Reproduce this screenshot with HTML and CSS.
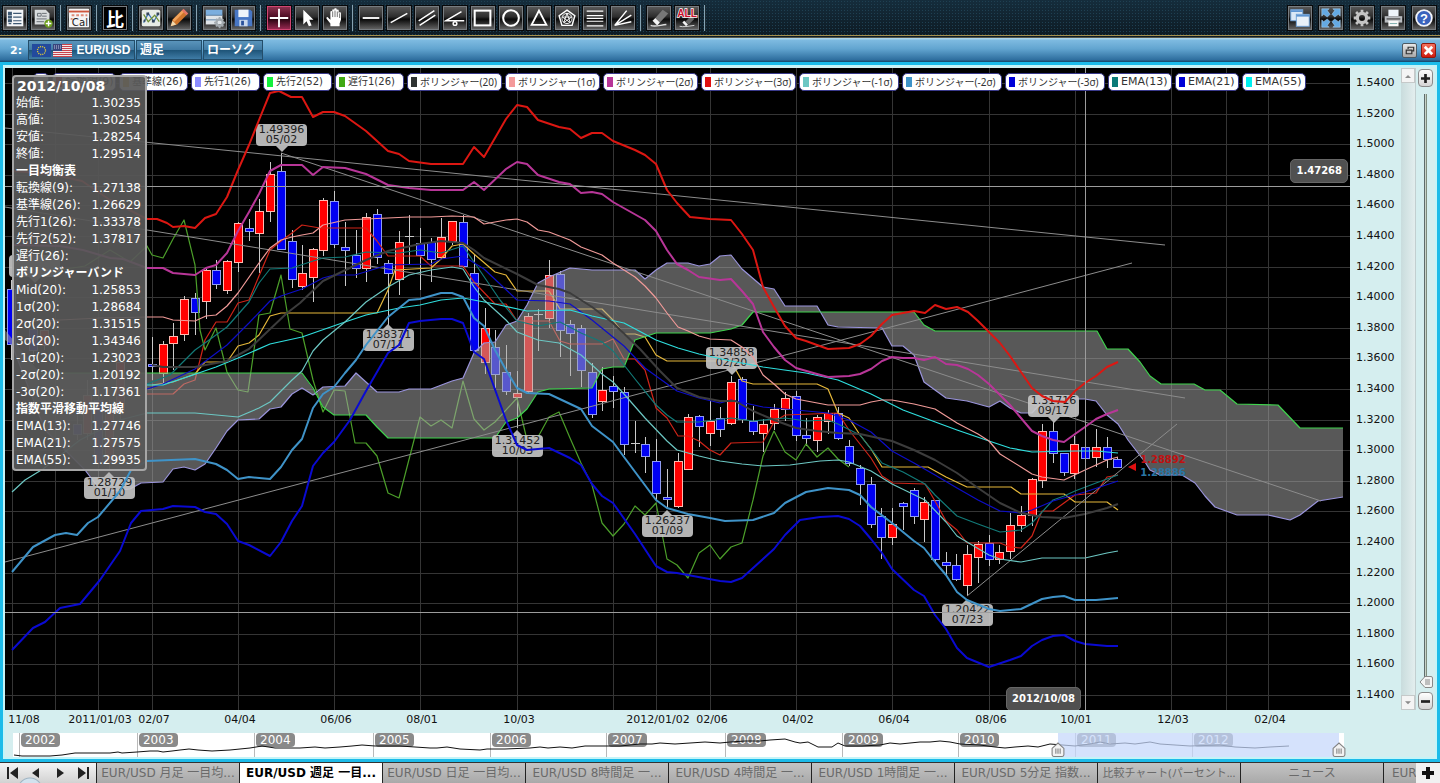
FILE: index.html
```html
<!DOCTYPE html>
<html lang="ja">
<head>
<meta charset="utf-8">
<title>EUR/USD 週足</title>
<link rel="stylesheet" href="styles.css">
</head>
<body>
<header class="toolbar">
  <div class="tools">
    <button class="tool" aria-label="一覧"><svg viewBox="0 0 26 26"><rect x="4" y="4" width="18" height="18" fill="#f4f6f8"/><path d="M6 7h3v2H6zM6 11h3v2H6zM6 15h3v2H6zM11 8h9M11 12h9M11 16h9M6 19h3M11 19h9" fill="#3f5a74" stroke="#3f5a74" stroke-width="1.3"/></svg></button>
    <button class="tool" aria-label="追加"><svg viewBox="0 0 26 26"><path d="M4 4h12l4 4v12H4z" fill="#d9dcde"/><path d="M7 8h4v3H7zM12 8h5M12 11h5M6 14h11M6 17h8" stroke="#62686e" fill="none"/><circle cx="19" cy="19" r="4.500" fill="#6d9e1c"/><path d="M19 16v6M16 19h6" stroke="#fff" stroke-width="1.500"/></svg></button>
    <span class="sep"></span>
    <button class="tool" aria-label="カレンダー"><svg viewBox="0 0 26 26"><rect x="2" y="3" width="22" height="20" rx="1" fill="#f5f5f5"/><path d="M2 6h22" stroke="#d0573d" stroke-width="2"/><path d="M5 10h3M10 10h3M15 10h3M20 10h2M4 14h2" stroke="#e08b78" stroke-width="2"/><text x="14" y="22" class="cal">Cal</text></svg></button>
    <span class="sep"></span>
    <button class="tool compare" aria-label="比較">比</button>
    <span class="sep"></span>
    <button class="tool" aria-label="指標"><svg viewBox="0 0 26 26"><rect x="3" y="4" width="20" height="18" rx="2" fill="#e8ece6"/><path d="M5 18l5-10 6 9 5-9" fill="none" stroke="#3973b9" stroke-width="1.300"/><path d="M5 9l5 8 7-7 5 7" fill="none" stroke="#709036" stroke-width="1.300"/><path d="M8 7h3v3H8zM14 15h3v3h-3zM19 7h3v3h-3zM5 15h2v2H5z" fill="#38475b"/></svg></button>
    <button class="tool" aria-label="描画"><svg viewBox="0 0 26 26"><path d="M4 22l2-7L17 4l5 5L11 20z" fill="#cf752c"/><path d="M6 15L17 4l2 2L8 17z" fill="#f1a35b"/><path d="M16 5l2-2 5 5-2 2z" fill="#e47667"/><path d="M4 22l2-6 4 4z" fill="#f0d9ae"/></svg></button>
    <span class="sep"></span>
    <button class="tool" aria-label="画面設定"><svg viewBox="0 0 26 26"><rect x="3" y="4" width="18" height="6" fill="#7baede"/><rect x="3" y="10" width="18" height="10" fill="#dfe4e8"/><path d="M3 10h18M3 15h18" stroke="#5981a7"/><circle cx="18" cy="18" r="3.500" fill="none" stroke="#a4abb0" stroke-width="2.500"/><path d="M18 12v3M18 21v3M12 18h3M21 18h3M14 14l2 2M20 20l2 2M14 22l2-2M20 16l2-2" stroke="#a4abb0" stroke-width="2"/></svg></button>
    <button class="tool" aria-label="保存"><svg viewBox="0 0 26 26"><path d="M4 4h17l2 2v16H4z" fill="#4876c4"/><path d="M8 4h11v8H8z" fill="#f0f4fa"/><path d="M9 15h9v7H9z" fill="#c9d8ee"/><path d="M11 16h3v5h-3z" fill="#28509b"/></svg></button>
    <span class="sep"></span>
    <button class="tool picked" aria-label="十字線"><svg viewBox="0 0 26 26" class="ink"><path d="M13 3v20M3 13h20" stroke-width="2"/></svg></button>
    <button class="tool" aria-label="選択"><svg viewBox="0 0 26 26"><path d="M9 4v16l3.500-3.500L15 22l3-1-2.500-6H20z" fill="#fff"/></svg></button>
    <button class="tool" aria-label="移動"><svg viewBox="0 0 26 26"><path d="M8 22v-3l-4-5c-1-2 1-3 2-1l2 2V7c0-2 2-2 2 0V5c0-2 2-2 2 0V4c0-2 3-2 3 0v1c0-1.500 2-1.500 2 0v3c0-1.500 2.500-1.500 2.500 0v7L18 19v3z" fill="#fff"/><path d="M10.500 6v6M13 5v7M15.500 6v6M18 8v5" stroke="#444" stroke-width=".8"/></svg></button>
    <span class="sep"></span>
    <button class="tool" aria-label="水平線"><svg viewBox="0 0 26 26" class="ink"><path d="M4 13h18" stroke-width="2"/></svg></button>
    <button class="tool" aria-label="トレンドライン"><svg viewBox="0 0 26 26" class="ink"><path d="M4 18L22 8"/></svg></button>
    <button class="tool" aria-label="平行線"><svg viewBox="0 0 26 26" class="ink"><path d="M4 16L21 5M5 21L22 10"/></svg></button>
    <button class="tool" aria-label="角度線"><svg viewBox="0 0 26 26" class="ink"><path d="M20 6L3 16h20"/><circle cx="13" cy="19" r="2"/></svg></button>
    <button class="tool" aria-label="四角形"><svg viewBox="0 0 26 26" class="ink"><rect x="4" y="5" width="17" height="16" stroke-width="2.200"/></svg></button>
    <button class="tool" aria-label="円"><svg viewBox="0 0 26 26" class="ink"><circle cx="13" cy="13" r="8.500" stroke-width="2.200"/></svg></button>
    <button class="tool" aria-label="三角形"><svg viewBox="0 0 26 26" class="ink"><path d="M13 5l8 15.500H5z" stroke-width="2"/></svg></button>
    <button class="tool" aria-label="五角形"><svg viewBox="0 0 26 26" class="ink"><path d="M13 4.500l8.500 6-3 10.500h-11l-3-10.500z"/><circle cx="13" cy="13.500" r="5.500" stroke-width="1"/><path d="M13 8l3.500 10-8.500-6h10l-8.500 6z" stroke-width="1"/></svg></button>
    <button class="tool" aria-label="フィボナッチ"><svg viewBox="0 0 26 26" class="ink"><path d="M4 5.500h18M4 10.500h18M4 13.500h18M4 16.500h18M4 21.500h18" stroke-width="1.300"/></svg></button>
    <button class="tool" aria-label="ファン"><svg viewBox="0 0 26 26" class="ink"><path d="M17 5L4 21l18-11M4 21l18-4"/></svg></button>
    <span class="sep"></span>
    <button class="tool" aria-label="消去"><svg viewBox="0 0 26 26"><path d="M9 13l8-9 6 4-9 10z" fill="#777"/><path d="M9 13l5 5-3 3-5-5z" fill="#f5f5f5"/><path d="M4 21c4 2 9 0 17-1" stroke="#ddd" fill="none" stroke-width="1.500"/></svg></button>
    <button class="tool" aria-label="すべて消去"><svg viewBox="0 0 26 26"><path d="M11 17l6-6 4 3-6 6z" fill="#666"/><path d="M10 16l4 4-2 2-4-4z" fill="#f5f5f5"/><path d="M5 22c4 1 9 0 16-1" stroke="#ddd" fill="none"/><text x="13" y="12" class="all">ALL</text></svg></button>
    <span class="sep"></span>
  </div>
  <div class="tools wide">
    <button class="tool" aria-label="重ねて表示"><svg viewBox="0 0 26 26"><rect x="3" y="4" width="13" height="12" fill="#dbe8f6" stroke="#6d9fd4"/><path d="M3 5.500h13" stroke="#5e95d2" stroke-width="2"/><rect x="9" y="9" width="14" height="13" fill="#e8f0f8" stroke="#6d9fd4"/><path d="M9 10.500h14" stroke="#5e95d2" stroke-width="2"/></svg></button>
    <button class="tool" aria-label="全画面"><svg viewBox="0 0 26 26"><path d="M3 3h8L9 5l3 4-3 3-4-3-2 2zM23 3v8l-2-2-4 3-3-3 3-4-2-2zM3 23v-8l2 2 4-3 3 3-3 4 2 2zM23 23h-8l2-2-3-4 3-3 4 3 2-2z" fill="#64a9e2" stroke="#b9ddf7" stroke-width=".5"/></svg></button>
    <button class="tool" aria-label="設定"><svg viewBox="0 0 26 26"><circle cx="13" cy="13" r="5" fill="none" stroke="#c4c4c4" stroke-width="3.500"/><path d="M13 4v4M13 18v4M4 13h4M18 13h4M6.600 6.600l3 3M16.400 16.400l3 3M6.600 19.400l3-3M16.400 9.600l3-3" stroke="#c4c4c4" stroke-width="3"/></svg></button>
    <button class="tool" aria-label="印刷"><svg viewBox="0 0 26 26"><path d="M8 4h11v7H8z" fill="#eef4fa"/><path d="M4 11h19v7H4z" fill="#b9bcc0"/><path d="M6 14h15" stroke="#555" stroke-width="1.500"/><path d="M8 16h11v6H8z" fill="#f7f7f7"/><path d="M9.500 19h8" stroke="#7aa"/></svg></button>
    <button class="tool" aria-label="ヘルプ"><svg viewBox="0 0 26 26"><circle cx="13" cy="13" r="8.500" fill="#3a63bd" stroke="#f3f5fa" stroke-width="2"/><text x="13" y="18" class="help">?</text></svg></button>
  </div>
</header>

<div class="titlebar">
  <span class="num">2:</span>
  <button class="pick pair">
    <svg class="flag" viewBox="0 0 19 13"><rect width="19" height="13" fill="#234a9d"/><circle cx="9.500" cy="6.500" r="4" fill="none" stroke="#d9c53c" stroke-width="1.300" stroke-dasharray="1.200 .9"/></svg>
    <svg class="flag" viewBox="0 0 19 13"><rect width="19" height="13" fill="#f3e9ea"/><path d="M0 .5h19M0 2.500h19M0 4.500h19M0 6.500h19M0 8.500h19M0 10.500h19M0 12.500h19" stroke="#c8434c"/><rect width="9" height="7" fill="#39457d"/><path d="M1 2h8M1 4h8" stroke="#c8cde4" stroke-dasharray="1 1"/></svg>
    EUR/USD</button>
  <button class="pick span">週足</button>
  <button class="pick kind">ローソク</button>
  <span class="grow"></span>
  <button class="win" aria-label="元に戻す"><svg viewBox="0 0 14 14"><path d="M5.500 5.500v-2h6v4h-2M3.500 6.500h6v4h-6z" fill="none" stroke="#333" stroke-width="1.300"/></svg></button>
  <button class="win close" aria-label="閉じる"><svg viewBox="0 0 14 14"><path d="M3 3l8 8M11 3l-8 8" stroke="#fff" stroke-width="3"/></svg></button>
</div>

<main class="frame">
  <div class="upper">
    <section class="plot" aria-label="EUR/USD 週足チャート">
      <svg class="layer" viewBox="5 68 1345 642" preserveAspectRatio="none">
        <g id="grid" class="grid"></g>
        <g id="candles" class="candles"></g>
        <g class="thin">
          <polyline stroke="#cf2418" points="147,394 173,394 184,384 195,380 205,340 216,322 227,322 238,303 249,300 259,276 270,250 281,241 292,233 302,225 320,228 366,228 377,241 388,256 420,256 431,266 463,266 474,282 495,304 506,304 517,321 549,321 560,341 570,344 602,344 613,339 624,359 635,359 645,370 656,408 667,418 678,436 688,436 699,441 710,450 720,455 731,443 763,442 774,422 785,415 838,413 849,430 860,444 871,458 882,476 893,483 925,484 935,501 946,521 957,530 967,543 1000,543 1010,547 1021,548 1032,536 1042,511 1053,511 1064,503 1075,495 1096,493 1107,477 1118,475"/>
          <polyline stroke="#e6b83a" points="152,385 173,382 195,374 205,362 227,362 238,346 249,343 259,335 270,316 281,313 377,313 388,290 395,270 431,268 441,259 452,246 463,244 474,254 495,272 506,275 517,291 549,291 560,309 602,309 613,320 624,334 635,334 645,337 656,355 667,361 731,361 742,381 753,384 817,384 828,389 838,413 849,418 860,435 871,449 882,467 928,467 946,477 967,487 1011,487 1021,494 1064,494 1075,502 1107,502 1118,510"/>
          <polyline stroke="#4c9f2a" points="12,260 40,252 60,270 85,266 110,250 130,262 147,246 152,255 163,258 173,239 184,220 195,265 200,330 205,350 216,328 227,372 238,390 248,392 259,315 270,313 281,275 290,329 302,333 313,380 323,412 334,390 345,391 355,443 366,443 377,456 388,493 399,498 420,417 431,426 441,420 452,428 463,381 474,419 484,430 495,422 517,398 527,440 538,437 549,417 559,412 570,438 581,463 592,485 602,523 613,536 624,524 635,506 645,515 656,503 667,559 677,565 688,578 699,553 710,545 720,559 731,547 742,543 753,500 763,456 774,431 785,452 796,460 806,444 817,457 828,448 838,459 849,467"/>
        </g>
        <g class="cloud">
          <path d="M5 340L12 345L45 430L85 470L98 487L110 491L130 489L141 483L163 482L173 469L184 467L195 470L205 464L216 448L227 431L238 420L259 419L270 409L281 407L292 394L302 388L313 395L317 395L302 373H130L80 373L40 373L5 330z"/>
          <path d="M317 393L323 387L345 386L356 373L377 392L399 392L409 389L431 389L452 381L463 378L474 353L484 343L495 342L506 325L517 321L527 305L538 283L549 277L570 268L592 270L635 270L645 279L656 270L667 263L688 263L699 266L710 264L720 256L731 255L742 269L763 287L774 289L785 306L817 306L821 312H753L742 325L731 329L710 333H656L635 340L624 367H613L602 369L592 388L549 389L538 392L527 409L517 418L506 422L495 438H388L377 427L366 415H334L323 407z"/>
          <path d="M821 312L828 325L838 327L882 328L892 346L903 346L914 355L924 382L935 390L946 398L967 401L989 407L1000 401L1010 408L1021 413L1032 413L1042 402L1053 399H1085L1096 401L1107 415L1118 424L1128 440L1145 462L1150 470L1160 475H1182L1195 483L1205 496L1215 507L1237 515H1268L1290 520L1300 515L1318 501L1343 497V428H1300L1278 405L1237 404L1220 390H1205L1194 384H1161L1150 376L1140 362L1128 349H1107L1097 331H935L924 325L914 312z"/>
        </g>
        <g class="thin">
          <polyline stroke="#9a94dc" points="12,345 45,430 85,470 98,487 110,491 130,489 141,483 163,482 173,469 184,467 195,470 205,464 216,448 227,431 238,420 259,419 270,409 281,407 292,394 302,388 313,395 323,387 345,386 356,373 377,392 399,392 409,389 431,389 452,381 463,378 474,353 484,343 495,342 506,325 517,321 527,305 538,283 549,277 570,268 592,270 635,270 645,279 656,270 667,263 688,263 699,266 710,264 720,256 731,255 742,269 763,287 774,289 785,306 817,306 828,325 838,327 882,328 892,346 903,346 914,355 924,382 935,390 946,398 967,401 989,407 1000,401 1010,408 1021,413 1032,413 1042,402 1053,399 1085,399 1096,401 1107,415 1118,424 1128,440 1145,462 1150,470 1160,475 1182,475 1195,483 1205,496 1215,507 1237,515 1268,515 1290,520 1300,515 1318,501 1343,497"/>
          <polyline stroke="#3fd24d" points="40,373 302,373 313,388 323,407 334,415 366,415 377,427 388,438 495,438 506,422 517,418 527,409 538,392 549,389 592,388 602,369 613,367 624,367 635,340 656,333 710,333 731,329 742,325 753,312 914,312 924,325 935,331 1097,331 1107,349 1128,349 1140,362 1150,376 1161,384 1194,384 1205,390 1220,390 1237,404 1278,405 1300,428 1343,428"/>
        </g>
        <g class="trend">
          <path d="M5 128L1165 245M281 153L1321 501M5 207L1185 398M5 562L1132 263M967 596L1177 424"/>
        </g>
      </svg>
      <div id="callouts"></div>
      <svg class="layer" viewBox="5 68 1345 642" preserveAspectRatio="none">
        <g class="thin">
          <polyline stroke="#127a78" points="147,384 170,375 195,350 205,343 227,327 249,302 259,283 270,269 292,268 313,261 323,258 345,257 366,252 399,253 420,250 441,253 463,246 474,262 500,300 517,321 538,326 560,322 581,333 602,342 613,351 635,379 656,405 667,415 677,422 699,422 731,418 753,421 785,418 806,421 828,420 838,424 860,435 871,449 882,463 903,472 925,484 935,495 957,516 978,524 1000,532 1021,530 1032,523 1053,500 1064,496 1075,491 1096,483 1118,475"/>
          <polyline stroke="#0d0dc8" points="147,389 163,384 195,369 227,345 249,323 270,301 281,296 302,289 323,278 334,275 355,275 388,265 431,264 441,259 463,256 484,269 517,300 549,301 570,304 592,320 624,346 645,368 656,376 677,391 699,398 720,403 731,400 763,407 796,410 828,413 849,420 871,432 892,451 914,463 935,475 957,488 978,500 1000,511 1021,513 1032,510 1053,501 1085,492 1118,481"/>
          <polyline stroke="#2fdede" points="147,385 163,385 190,376 216,367 238,358 270,344 302,337 345,322 366,315 399,308 420,305 441,300 463,298 495,304 527,311 570,310 592,316 624,323 656,340 678,348 699,354 731,361 763,367 806,373 838,380 871,394 903,410 938,423 957,430 989,441 1010,448 1032,452 1075,451 1096,451 1118,453"/>
          <polyline stroke="#f09a98" points="12,322 60,320 100,318 147,317 163,317 173,320 195,321 206,316 216,315 227,306 238,293 259,263 270,248 281,240 292,237 302,235 313,233 323,225 345,220 366,219 388,218 409,217 431,217 452,216 474,217 484,224 506,220 517,219 527,222 538,230 549,232 570,240 581,247 602,255 613,263 635,277 645,286 656,298 667,313 678,327 688,331 699,336 710,339 731,340 742,347 753,357 763,375 774,384 785,394 796,399 828,405 860,405 871,402 882,400 892,400 914,404 935,409 957,423 978,434 989,441 1000,454 1021,467 1032,474 1042,477 1064,480 1085,470 1107,460 1118,457"/>
          <polyline stroke="#6cc7c3" points="12,492 25,480 43,469 80,440 120,420 147,413 195,413 238,417 259,408 270,402 281,391 292,380 302,371 313,351 323,340 345,322 366,302 388,287 409,275 431,270 452,267 463,269 474,287 484,300 506,320 517,332 538,340 559,343 570,349 581,355 592,365 602,374 613,382 624,394 645,418 667,441 677,450 699,456 720,461 742,464 763,466 790,465 820,461 838,460 849,462 871,471 892,484 925,500 946,522 957,536 967,542 989,555 1000,559 1021,562 1042,558 1085,558 1107,553 1118,551"/>
        </g>
        <g class="thick">
          <polyline stroke="#3c3c3c" points="152,365 163,367 195,367 227,361 249,349 287,313 300,303 323,281 366,260 388,251 420,244 441,241 463,243 474,250 484,258 517,274 538,285 559,289 570,293 592,307 613,323 640,349 660,371 677,388 699,397 720,401 735,401 753,411 774,420 796,428 817,431 838,433 860,434 892,441 914,450 935,460 957,473 978,488 1000,503 1021,513 1042,517 1064,518 1085,514 1107,508 1118,504"/>
          <polyline stroke="#dc1712" points="12,171 50,174 82,181 110,200 147,219 157,219 167,223 173,227 184,226 195,228 205,218 216,214 227,197 238,170 249,145 259,120 270,93 279,91 291,97 302,97 313,117 323,112 334,112 345,116 366,131 388,151 399,154 409,161 431,164 463,164 474,147 484,157 506,119 517,105 527,107 538,120 559,127 570,129 581,138 592,133 602,133 613,141 635,150 645,155 656,164 667,190 677,203 690,217 710,219 731,220 742,234 753,250 763,287 774,307 785,326 796,338 806,341 828,349 849,348 860,344 871,336 882,324 892,315 903,313 914,311 925,313 935,305 946,309 957,307 968,312 978,321 989,332 1000,343 1010,356 1021,372 1032,388 1042,396 1053,401 1065,402 1075,391 1085,383 1096,376 1107,367 1118,362"/>
          <polyline stroke="#b83698" points="12,245 60,246 83,250 110,258 123,259 147,268 163,268 173,273 195,275 206,268 216,265 227,253 238,231 249,212 259,194 270,171 281,165 302,165 313,175 323,167 345,168 366,174 388,185 409,188 431,190 463,190 474,182 484,190 506,169 517,162 527,164 538,175 559,182 570,184 581,193 592,192 602,194 613,202 645,220 656,231 667,250 677,264 688,270 699,277 720,280 731,279 742,291 753,304 763,332 774,347 785,360 796,368 817,374 828,377 849,376 860,374 871,369 882,361 892,357 903,358 914,358 924,360 935,357 946,364 957,365 968,369 978,375 989,384 1010,405 1032,431 1042,436 1053,440 1064,442 1075,434 1085,427 1096,419 1107,414 1118,410"/>
          <polyline stroke="#3f93c8" points="12,572 33,547 55,535 66,533 77,535 88,523 98,517 120,491 131,470 147,461 195,459 216,464 227,470 238,479 249,477 270,479 281,467 292,450 302,439 313,408 323,394 334,387 345,373 356,360 366,345 388,317 409,300 420,299 441,293 452,293 463,297 474,318 484,326 495,350 506,370 517,388 527,393 549,394 581,409 592,426 613,442 624,457 656,500 667,508 688,514 710,518 725,521 753,520 774,513 785,503 806,492 828,488 849,490 860,495 871,507 892,523 914,541 924,548 935,562 946,575 957,592 967,600 989,609 1000,611 1021,609 1042,599 1053,597 1064,596 1075,600 1096,600 1118,598"/>
          <polyline stroke="#0a0ad2" points="12,650 33,628 45,622 60,608 80,604 100,580 120,551 131,523 141,511 163,509 173,506 195,507 205,512 216,514 227,524 238,541 249,545 270,556 281,542 292,521 302,506 313,466 323,453 334,442 350,420 366,391 388,353 399,345 409,323 420,321 441,319 452,319 463,323 474,352 484,359 506,420 517,445 527,450 538,449 549,448 570,458 581,465 592,484 602,496 613,503 635,534 656,566 667,572 677,573 720,581 731,582 742,578 774,549 785,535 800,520 820,517 838,516 849,519 860,526 871,539 882,553 892,569 914,590 924,596 935,615 946,629 957,648 967,658 989,667 1010,660 1021,656 1032,646 1042,640 1053,636 1064,635 1075,641 1085,644 1107,646 1118,646"/>
        </g>
        <path class="cross" d="M1085.500 68V710M5 186.500H1350M5 612.500H1350"/>
        <path d="M1128 467l8-4v8z" fill="#e00f0f"/>
      </svg>
      <div class="last"><span class="ask">1.28892</span><span class="bid">1.28886</span></div>
      <output class="tag price">1.47268</output>
      <output class="tag day">2012/10/08</output>
      <div class="legend">
        <span class="chip stub"></span>
        <span class="chip"><i class="c-red"></i>転換線(9)</span>
        <span class="chip jp"><i class="c-gold"></i>基準線(26)</span>
        <span class="chip jp"><i class="c-lav"></i>先行1(26)</span>
        <span class="chip jp"><i class="c-green"></i>先行2(52)</span>
        <span class="chip jp"><i class="c-leaf"></i>遅行1(26)</span>
        <span class="chip bol"><i class="c-dark"></i>ボリンジャー(20)</span>
        <span class="chip bol"><i class="c-pink"></i>ボリンジャー(1σ)</span>
        <span class="chip bol"><i class="c-mag"></i>ボリンジャー(2σ)</span>
        <span class="chip bol"><i class="c-red"></i>ボリンジャー(3σ)</span>
        <span class="chip neg"><i class="c-aqua"></i>ボリンジャー(-1σ)</span>
        <span class="chip neg"><i class="c-sky"></i>ボリンジャー(-2σ)</span>
        <span class="chip neg"><i class="c-blue"></i>ボリンジャー(-3σ)</span>
        <span class="chip"><i class="c-teal"></i>EMA(13)</span>
        <span class="chip"><i class="c-blue"></i>EMA(21)</span>
        <span class="chip"><i class="c-cyan"></i>EMA(55)</span>
      </div>
      <aside class="info">
        <h1>2012/10/08</h1>
        <dl>
          <div><dt>始値:</dt><dd>1.30235</dd></div>
          <div><dt>高値:</dt><dd>1.30254</dd></div>
          <div><dt>安値:</dt><dd>1.28254</dd></div>
          <div><dt>終値:</dt><dd>1.29514</dd></div>
        </dl>
        <h2>一目均衡表</h2>
        <dl>
          <div><dt>転換線(9):</dt><dd>1.27138</dd></div>
          <div><dt>基準線(26):</dt><dd>1.26629</dd></div>
          <div><dt>先行1(26):</dt><dd>1.33378</dd></div>
          <div><dt>先行2(52):</dt><dd>1.37817</dd></div>
          <div><dt>遅行(26):</dt><dd></dd></div>
        </dl>
        <h2>ボリンジャーバンド</h2>
        <dl>
          <div><dt>Mid(20):</dt><dd>1.25853</dd></div>
          <div><dt>1σ(20):</dt><dd>1.28684</dd></div>
          <div><dt>2σ(20):</dt><dd>1.31515</dd></div>
          <div><dt>3σ(20):</dt><dd>1.34346</dd></div>
          <div><dt>-1σ(20):</dt><dd>1.23023</dd></div>
          <div><dt>-2σ(20):</dt><dd>1.20192</dd></div>
          <div><dt>-3σ(20):</dt><dd>1.17361</dd></div>
        </dl>
        <h2>指数平滑移動平均線</h2>
        <dl>
          <div><dt>EMA(13):</dt><dd>1.27746</dd></div>
          <div><dt>EMA(21):</dt><dd>1.27575</dd></div>
          <div><dt>EMA(55):</dt><dd>1.29935</dd></div>
        </dl>
      </aside>
    </section>
    <div class="prices">
      <span>1.5400</span><span>1.5200</span><span>1.5000</span><span>1.4800</span><span>1.4600</span><span>1.4400</span><span>1.4200</span><span>1.4000</span><span>1.3800</span><span>1.3600</span><span>1.3400</span><span>1.3200</span><span>1.3000</span><span>1.2800</span><span>1.2600</span><span>1.2400</span><span>1.2200</span><span>1.2000</span><span>1.1800</span><span>1.1600</span><span>1.1400</span>
    </div>
    <div class="scroll">
      <button aria-label="上へ"><svg viewBox="0 0 8 5"><path d="M0 5l4-4 4 4z"/></svg></button>
      <button aria-label="下へ"><svg viewBox="0 0 8 5"><path d="M0 0l4 4 4-4z"/></svg></button>
    </div>
    <div class="zoom">
      <button aria-label="拡大"><svg viewBox="0 0 10 10"><path d="M5 0v10M0 5h10"/></svg></button>
      <input type="range" min="0" max="100" value="0" aria-label="表示倍率">
      <button aria-label="縮小"><svg viewBox="0 0 10 10"><path d="M0 5h10"/></svg></button>
    </div>
  </div>
  <div class="dates" id="dates"></div>
  <div class="overview">
    <svg class="layer" viewBox="13 733 1331 24" preserveAspectRatio="none">
      <path class="years" d="M19.500 733v24M137.500 733v24M254.500 733v24M373.500 733v24M490.500 733v24M606.500 733v24M725.500 733v24M842.500 733v24M958.500 733v24M1075.500 733v24M1192.500 733v24"/>
    </svg>
    <div id="years"></div>
    <svg class="layer" viewBox="13 733 1331 24" preserveAspectRatio="none">
      <polyline class="trace" points="14,755 22,756 50,756 62,755 75,753 110,753 118,752 122,753 137,752 150,751 158,751 163,752 172,751 180,750 189,749 198,750 212,751 230,750 250,748 262,746 275,748 290,748 300,748 315,747 325,748 340,747 352,746 362,745 375,746 400,746 415,747 430,748 437,748 447,747 460,749 480,750 487,749 505,749 530,748 540,747 548,748 560,747 572,748 585,746 600,746 620,746 640,744 652,744 660,743 675,744 690,743 705,742 720,743 730,742 745,741 760,741 770,740 785,739 795,742 800,743 808,742 818,747 825,747 832,747 838,743 845,746 862,746 880,745 890,743 900,744 920,742 930,742 940,741 950,742 960,744 980,745 995,747 1005,748 1015,747 1028,746 1038,747 1050,744 1075,746 1090,744 1100,742 1110,744 1125,743 1135,744 1150,742 1160,744 1175,745 1190,746 1220,745 1235,747 1255,748 1270,747 1289,746"/>
      <rect class="range" x="1058" y="733" width="281" height="24"/>
    </svg>
    <button class="grip from" aria-label="開始"><svg viewBox="0 0 13 14"><path d="M1 6l5.500-5L12 6v6a1.500 1.500 0 0 1-1.500 1.500h-8A1.500 1.500 0 0 1 1 12z"/><path d="M4.500 6v5M6.500 6v5M8.500 6v5"/></svg></button>
    <button class="grip to" aria-label="終了"><svg viewBox="0 0 13 14"><path d="M1 6l5.500-5L12 6v6a1.500 1.500 0 0 1-1.500 1.500h-8A1.500 1.500 0 0 1 1 12z"/><path d="M4.500 6v5M6.500 6v5M8.500 6v5"/></svg></button>
  </div>
</main>

<nav class="tabs">
  <div class="pager">
    <button aria-label="最初"><svg viewBox="0 0 12 12"><path d="M1 0h2v12H1zM12 0v12L4 6z"/></svg></button>
    <button aria-label="前"><svg viewBox="0 0 12 12"><path d="M9 1v10L2 6z"/></svg></button>
    <button aria-label="次"><svg viewBox="0 0 12 12"><path d="M3 1v10l7-5z"/></svg></button>
    <button aria-label="最後"><svg viewBox="0 0 12 12"><path d="M9 0h2v12H9zM0 0v12l8-6z"/></svg></button>
  </div>
  <button class="tab">EUR/USD 月足 一目均...</button>
  <button class="tab on">EUR/USD 週足 一目...</button>
  <button class="tab">EUR/USD 日足 一目均...</button>
  <button class="tab">EUR/USD 8時間足 一...</button>
  <button class="tab">EUR/USD 4時間足 一...</button>
  <button class="tab">EUR/USD 1時間足 一...</button>
  <button class="tab">EUR/USD 5分足 指数...</button>
  <button class="tab small">比較チャート(パーセント...</button>
  <button class="tab">ニュース</button>
  <button class="tab cut">EUR</button>
  <button class="add" aria-label="タブを追加"><svg viewBox="0 0 12 12"><path d="M6 0v12M0 6h12"/></svg></button>
</nav>
<script src="chart.js"></script>
</body>
</html>
```
FILE: styles.css
```css
* { box-sizing: border-box; }
html, body { height: 100%; }
body {
  margin: 0;
  display: flex;
  flex-direction: column;
  overflow: hidden;
  background: #d5eeef;
  font: 11px/16px "DejaVu Sans", "Noto Sans CJK JP", sans-serif;
  color: #111;
}
button { margin: 0; padding: 0; border: 0; background: none; font: inherit; color: inherit; }
svg { display: block; }

.toolbar {
  flex: none;
  height: 38px;
  padding: 5px 3px 0 2px;
  display: flex;
  justify-content: space-between;
  border-bottom: 1px solid #55594e;
  background:
    linear-gradient(#a58f4c, #a58f4c) 0 35px / 100% 1px no-repeat,
    radial-gradient(#1f4052 0 1px, transparent 1px) 0 0 / 3px 3px,
    linear-gradient(#152d3c, #0d1a23);
}
.tools { display: flex; gap: 2px; height: 26px; }
.tools.wide { gap: 5px; }
.tool {
  width: 26px;
  height: 26px;
  border: 1px solid #08090a;
  outline: 1px solid #777c80;
  outline-offset: -2px;
  background: linear-gradient(#5c5c5c, #2c2c2c 45%, #090909 55%, #6a6a6a);
}
.tool svg { width: 24px; height: 24px; }
.tool.picked { background: linear-gradient(#8f3552, #4e0d24 45%, #2a0512 55%, #a02b55); outline-color: #d14573; }
.tool.compare { background: #000; color: #fff; font: 700 18px/22px "Noto Sans CJK JP", sans-serif; }
.sep { width: 2px; margin: 0 2px; height: 26px; background: #86a3b3; border-right: 1px solid #1a2a33; }
.ink { fill: none; stroke: #fff; stroke-width: 1.6; }
.cal { font: 11px "DejaVu Sans", sans-serif; text-anchor: middle; fill: #222; }
.all { font: 700 11px "Liberation Sans", sans-serif; text-anchor: middle; fill: #c8102e; stroke: #fff; stroke-width: 1.5; paint-order: stroke; }
.help { font: 700 14px "Liberation Sans", sans-serif; text-anchor: middle; fill: #fff; }

.titlebar {
  flex: none;
  height: 24px;
  padding: 2px 4px 2px 10px;
  display: flex;
  align-items: center;
  gap: 1px;
  color: #fff;
  background: linear-gradient(#b9dcef, #7dbae0 10%, #62a5d0 45%, #2f6f9f 90%, #174565);
}
.num { width: 17px; padding-top: 1px; font-weight: 700; }
.pick {
  height: 20px;
  display: flex;
  align-items: center;
  padding: 0 3px;
  border: 1px solid #234d6a;
  background: linear-gradient(#5a94bb, #417ba4 48%, #1f5579 52%, #3f7ca6);
  color: #fff;
  font: 700 12px/18px "Liberation Sans", "Noto Sans CJK JP", sans-serif;
}
.pair { width: 107px; gap: 2px; justify-content: center; }
.span { width: 66px; }
.kind { width: 60px; }
.flag { width: 19px; height: 13px; }
.flag + .flag { margin-right: 2px; }
.grow { flex: 1; }
.win { width: 15px; height: 15px; border: 1px solid #4d5a63; border-radius: 2px; background: linear-gradient(#e8e8e8, #a8a8a8); }
.win svg { width: 13px; height: 13px; }
.win.close { margin-left: 3px; border-color: #92170c; background: linear-gradient(#f4705c, #cf1a10); }

.frame {
  flex: 1;
  min-height: 0;
  display: flex;
  flex-direction: column;
  border: 3px solid #1cbbe9;
  border-top-width: 4px;
  outline: 2px solid #c4f4f8;
  outline-offset: -5px;
  padding: 2px;
  background: #d5eeef;
}
.upper { flex: 1; min-height: 0; display: flex; }
.plot { position: relative; flex: 1; min-width: 0; background: #000; overflow: hidden; }
.layer { position: absolute; inset: 0; width: 100%; height: 100%; }
.grid { stroke: #353535; shape-rendering: crispEdges; }
.candles { shape-rendering: crispEdges; }
.wick { stroke: #c9c9c9; }
.up { fill: #f00; stroke: #ffb9b0; }
.down { fill: #0000f2; stroke: #8f9bf0; }
.thin { fill: none; stroke-width: 1.2; stroke-linejoin: round; }
.thick { fill: none; stroke-width: 2; stroke-linejoin: round; }
.cloud { fill: #a9a9a9; fill-opacity: .52; }
.trend { fill: none; stroke: #8c8c8c; }
.cross { stroke: #9c9c9c; shape-rendering: crispEdges; }

.callout {
  position: absolute;
  width: 51px;
  margin-left: -25px;
  padding: 1px 0;
  border-radius: 4px;
  background: rgba(200, 200, 200, .9);
  color: #222;
  text-align: center;
  line-height: 10px;
}
.callout::before { content: ""; position: absolute; left: 20px; border: 6px solid transparent; }
.callout.high::before { top: 100%; border-top-color: #b4b4b4; border-bottom: 0; }
.callout.low::before { bottom: 100%; border-width: 0 5px 5px; border-bottom-color: #b4b4b4; }

.last { position: absolute; left: 84.4%; top: 60%; display: flex; flex-direction: column; font-weight: 700; font-size: 10px; line-height: 13px; }
.ask { color: #c01010; }
.bid { color: #2a76a6; }

.tag {
  position: absolute;
  padding: 3px 5px;
  border: 1px solid #666;
  border-radius: 5px;
  background: #505050;
  color: #fff;
  font-size: 10px;
  font-weight: 700;
}
.tag.price { right: 2px; top: 14.2%; }
.tag.day { right: 20%; bottom: -1px; }

.legend {
  position: absolute;
  top: 5px;
  right: 44px;
  display: flex;
  gap: 3px;
  white-space: nowrap;
}
.chip {
  width: 64px;
  height: 18px;
  padding-left: 3px;
  display: flex;
  align-items: center;
  gap: 3px;
  border: 1px solid #3a3a8c;
  border-radius: 5px;
  background: #fff;
  color: #333;
  line-height: 14px;
}
.chip i { flex: none; width: 6px; height: 10px; }
.chip.jp { width: 69px; }
.chip.jp, .chip.bol, .chip.neg { font-size: 10px; }
.chip.bol, .chip.neg { font-family: "Noto Sans", "Noto Sans CJK JP", sans-serif; }
.chip.bol { width: 95px; }
.chip.neg { width: 100px; }
.chip.stub { width: 16px; }
.c-red { background: #e01010; }
.c-gold { background: #e6b83a; }
.c-lav { background: #8c8cff; }
.c-green { background: #14f03c; }
.c-leaf { background: #40a811; }
.c-dark { background: #2e3232; }
.c-pink { background: #f49a9a; }
.c-mag { background: #b83698; }
.c-aqua { background: #6cc7c3; }
.c-sky { background: #3f93c8; }
.c-blue { background: #0000d8; }
.c-teal { background: #0b7a78; }
.c-cyan { background: #00f0f0; }

.info {
  position: absolute;
  left: 7px;
  top: 7px;
  width: 135px;
  padding: 1px 4px 0 2px;
  border: 2px solid #a6a6a6;
  border-radius: 4px;
  background: rgba(88, 88, 88, .93);
  color: #fff;
  font-size: 12px;
  line-height: 17px;
}
.info h1 { margin: 0; padding-left: 1px; font-size: 14px; line-height: 17px; }
.info h2 { margin: 0; font-size: 12px; line-height: 17px; }
.info dl { margin: 0; }
.info dl div { display: flex; justify-content: space-between; height: 17px; }
.info dd { margin: 0; }

.prices {
  flex: none;
  width: 51px;
  padding: 7px 0 7px 6px;
  display: flex;
  flex-direction: column;
  justify-content: space-between;
}
.scroll {
  flex: none;
  width: 15px;
  display: flex;
  flex-direction: column;
  justify-content: space-between;
  background: linear-gradient(90deg, #c9dcdd, #e3eeee);
  border-right: 1px solid #c2cfd0;
}
.scroll button { height: 15px; border: 1px solid #c5c9c9; background: #f4f4f4; display: grid; place-items: center; }
.scroll svg { width: 6px; height: 4px; fill: #8a8a8a; }
.zoom { flex: none; width: 19px; display: flex; flex-direction: column; align-items: center; padding-top: 1px; }
.zoom button {
  flex: none;
  width: 15px;
  height: 18px;
  display: grid;
  place-items: center;
  border: 1px solid #8b8b8b;
  border-radius: 4px;
  background: linear-gradient(#fff, #d5d5d5);
}
.zoom button svg { width: 9px; height: 9px; stroke: #222; stroke-width: 3; }
.zoom input {
  flex: 1;
  min-height: 0;
  width: 14px;
  margin: 7px 0 3px;
  appearance: none;
  writing-mode: vertical-lr;
  direction: rtl;
  background: linear-gradient(90deg, #5d6b6b 0 1px, #c8d2c8 1px 2px, #7e8c7e 2px 3px) center top / 3px 98% no-repeat;
}
.zoom input::-webkit-slider-thumb {
  appearance: none;
  width: 14px;
  height: 14px;
  background: url("data:image/svg+xml,%3Csvg xmlns='http://www.w3.org/2000/svg' viewBox='0 0 14 14'%3E%3Cpath d='M1 7l5-5.500h6a1.500 1.500 0 0 1 1.500 1.500v8a1.500 1.500 0 0 1-1.500 1.500H6z' fill='%23f4f4f4' stroke='%23888'/%3E%3Cpath d='M6 5h5M6 7h5M6 9h5' stroke='%23888'/%3E%3C/svg%3E");
}

.dates { position: relative; flex: none; height: 23px; width: calc(100% - 85px); }
.dates span { position: absolute; top: 2px; transform: translateX(-50%); }

.overview { position: relative; flex: none; height: 24px; margin: 0 91px 0 8px; background: #fff; }
.years { stroke: #b9b9b9; fill: none; }
.trace { fill: none; stroke: #111; }
.range { fill: #c5d7fb; fill-opacity: .72; }
.year {
  position: absolute;
  top: 0;
  padding: 0 4px;
  border-radius: 4px;
  background: #8a8a8a;
  color: #fff;
  font-size: 12px;
  line-height: 14px;
}
.grip { position: absolute; top: 9px; width: 14px; margin-left: -7px; }
.grip svg { width: 14px; height: 15px; fill: #f2f2f2; stroke: #808080; }
.grip.from { left: 78.5%; }
.grip.to { left: 99.6%; }

.tabs { flex: none; height: 21px; display: flex; background: #b6b6b6; border-top: 1px solid #333; overflow: hidden; }
.pager {
  flex: none;
  width: 96px;
  display: flex;
  align-items: center;
  justify-content: space-around;
  background: radial-gradient(circle at 30px 27px, #d2e2ee 0 11px, #9fb4c3 12px, transparent 13px), linear-gradient(#f4f4f4, #d2d2d2);
}
.pager svg { width: 12px; height: 12px; fill: #222; }
.tab {
  flex: none;
  width: 143px;
  padding: 0 3px;
  border-left: 1px solid #222;
  background: linear-gradient(#c4c4c4, #a9a9a9);
  color: #6a6a6a;
  font-size: 12px;
  line-height: 20px;
  white-space: nowrap;
  overflow: hidden;
}
.tab.on { background: #fff; color: #000; font-weight: 700; }
.tab.small { font-family: "Noto Sans", "Noto Sans CJK JP", sans-serif; font-size: 11px; }
.tab.cut { flex: 1 1 0; min-width: 0; padding-left: 8px; text-align: left; }
.add { flex: none; width: 24px; display: grid; place-items: center; background: #f1f1f1; }
.add svg { width: 12px; height: 12px; stroke: #111; stroke-width: 4; }
```
FILE: chart.js
```js
const NS = "http://www.w3.org/2000/svg";
const view = { x: 5, y: 68, w: 1345, h: 642 };

function draw(parent, name, attrs) {
  const el = document.createElementNS(NS, name);
  for (const key in attrs) el.setAttribute(key, attrs[key]);
  parent.appendChild(el);
}

const grid = document.getElementById("grid");
const columns = [12, 55, 98, 152, 238, 334, 420, 517, 613, 656, 710, 796, 892, 989, 1075, 1171, 1226, 1268];
let lines = columns.map(x => `M${x + 0.5} 68V710`).join("");
for (let i = 0; i <= 20; i++) lines += `M5 ${Math.round(83 + i * 30.6) + 0.5}H1350`;
draw(grid, "path", { d: lines });

// [direction, centre x, body top, body bottom, wick top, wick bottom]
const candles = [
  ["d",11,289,344,280,360],["d",33,329,350,320,364],["u",44,330,345,322,350],["d",77,424,434,410,440],
  ["u",87,395,433,380,440],["d",98,400,462,390,468],["u",109,410,462,400,470],["u",120,362,410,350,420],
  ["d",152,364,366,337,380],["u",163,344,373,341,384],["u",173,336,343,323,370],["u",184,299,334,296,341],
  ["d",195,298,312,293,335],["u",206,270,301,269,319],["d",216,270,284,260,289],["u",227,261,290,260,294],
  ["u",238,223,262,222,272],["d",249,228,231,219,241],["u",259,211,233,199,273],["u",270,174,211,162,222],
  ["d",281,171,249,153,249],["d",292,241,279,230,288],["u",302,273,286,245,290],["u",313,249,277,248,302],
  ["u",323,200,250,198,256],["d",334,201,244,191,248],["d",345,247,250,222,286],["d",356,255,268,230,278],
  ["u",366,217,268,213,282],["d",377,214,257,209,264],["d",388,263,273,260,325],["u",399,242,279,231,295],
  ["n",409,236,236,215,264],["d",420,243,255,228,290],["d",431,242,259,238,282],["u",441,237,257,218,259],
  ["u",452,221,241,221,245],["d",463,222,266,215,268],["d",474,273,350,255,352],["u",485,328,362,308,374],
  ["d",495,347,374,330,388],["d",506,372,391,345,395],["u",517,393,397,371,428],["u",528,316,391,313,393],
  ["n",538,314,314,309,351],["u",549,275,318,260,328],["d",560,274,330,271,357],["d",570,324,333,320,376],
  ["d",581,328,370,325,387],["d",592,372,414,363,418],["u",602,390,401,367,411],["d",613,386,391,376,408],
  ["d",624,392,444,387,455],["n",635,443,443,421,453],["d",645,444,456,437,473],["d",656,461,493,439,500],
  ["d",667,497,499,469,507],["u",678,461,506,453,508],["u",688,417,469,414,470],["d",699,416,426,415,447],
  ["u",710,421,433,401,446],["d",720,418,429,407,437],["u",731,382,423,376,425],["d",742,379,419,377,423],
  ["d",753,421,431,406,435],["u",763,424,433,419,452],["u",774,409,423,404,430],["u",785,398,409,392,421],
  ["d",796,396,435,391,441],["d",806,435,438,418,446],["u",817,417,440,415,452],["u",828,413,421,410,434],
  ["d",838,413,438,407,440],["d",849,446,463,440,466],["d",860,468,484,465,505],["d",871,484,524,477,528],
  ["d",881,516,537,508,559],["u",892,524,537,508,545],["d",903,503,506,502,530],["d",914,490,516,488,524],
  ["u",924,502,519,497,542],["d",935,500,559,500,562],["d",946,562,565,552,575],["d",956,565,579,554,581],
  ["u",967,554,585,545,596],["u",978,544,557,541,583],["d",989,543,559,535,566],["u",999,552,559,545,564],
  ["u",1010,525,551,513,559],["u",1021,515,525,506,532],["u",1032,479,515,478,526],["u",1042,431,480,424,488],
  ["d",1053,431,453,420,463],["d",1064,453,472,453,476],["u",1074,444,473,436,479],["d",1085,447,458,446,459],
  ["u",1096,447,457,429,467],["d",1107,447,459,437,468],["d",1117,459,467,457,468]
];
const layer = document.getElementById("candles");
for (const [dir, x, top, bottom, high, low] of candles) {
  draw(layer, "path", { class: "wick", d: `M${x + 0.5} ${high}V${low}` });
  if (dir === "n") draw(layer, "path", { class: "wick", d: `M${x - 4} ${top + 0.5}h9` });
  else draw(layer, "rect", { class: dir === "u" ? "up" : "down", x: x - 3.5, y: top + 0.5, width: 8, height: bottom - top });
}

function place(parentId, cls, html, left, top) {
  const el = document.createElement("span");
  el.className = cls;
  el.innerHTML = html;
  el.style.left = left + "%";
  if (top !== undefined) el.style.top = top + "%";
  document.getElementById(parentId).appendChild(el);
}

const peaks = [
  ["high", 281, 124, "1.49396", "05/02"], ["low", 388, 329, "1.38371", "07/11"],
  ["low", 517, 435, "1.31452", "10/03"], ["low", 109, 477, "1.28729", "01/10"],
  ["low", 667, 515, "1.26237", "01/09"], ["high", 731, 347, "1.34858", "02/20"],
  ["high", 1053, 395, "1.31716", "09/17"], ["low", 967, 604, "1.20422", "07/23"],
  ["high", 34, 255, "", "<br>"]
];
for (const [kind, x, y, price, date] of peaks) {
  place("callouts", "callout " + kind, price + "<br>" + date, (x - view.x) / view.w * 100, (y - view.y) / view.h * 100);
}

const dates = [
  [24, "11/08"], [100, "2011/01/03"], [154, "02/07"], [240, "04/04"], [336, "06/06"], [422, "08/01"],
  [519, "10/03"], [658, "2012/01/02"], [712, "02/06"], [798, "04/02"], [894, "06/04"], [991, "08/06"],
  [1076, "10/01"], [1173, "12/03"], [1270, "02/04"]
];
for (const [x, text] of dates) place("dates", "date", text, (x - view.x) / view.w * 100);

[19, 137, 254, 373, 490, 606, 725, 842, 958, 1075, 1192].forEach((x, i) =>
  place("years", "year", 2002 + i, (x + 2 - 13) / 1331 * 100));
```
